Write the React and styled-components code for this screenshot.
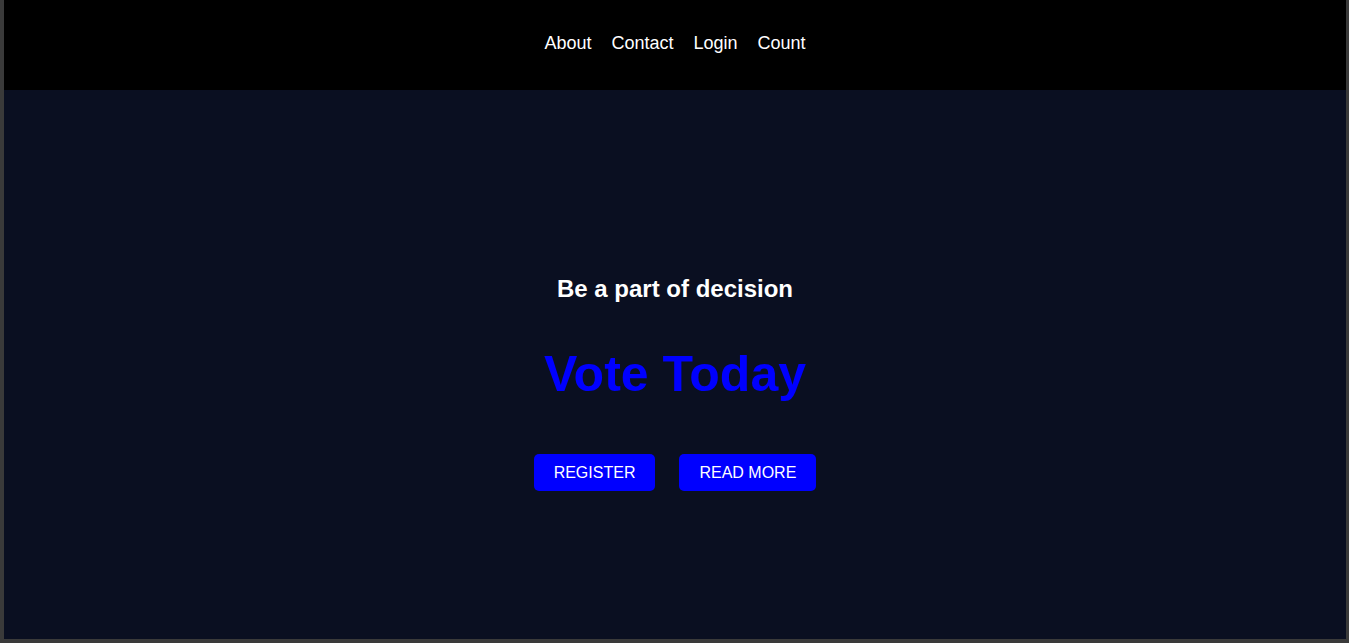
import React from 'react'
import styled, { createGlobalStyle } from 'styled-components'

const GlobalStyle = createGlobalStyle`
    html, body {
        margin: 0;
        padding: 0;
        height: 100%;
        background: #3a3a3a;
        font-family: Arial, "Liberation Sans", sans-serif;
    }

    #root {
        height: 100%;
    }
`

const Frame = styled.div`
    height: 100%;
    box-sizing: border-box;
    padding: 0 3px 4px 4px;
    display: flex;
    flex-direction: column;
`

const Page = styled.div`
    flex: 1;
    display: flex;
    flex-direction: column;
    background: #0a0f21;
`

const Nav = styled.nav`
    height: 90px;
    background: #000;
    display: flex;
    align-items: center;
    justify-content: center;
    gap: 20px;
    padding-bottom: 4px;
    box-sizing: border-box;

    a {
        color: #fff;
        text-decoration: none;
        font-size: 18px;
    }
`

const Hero = styled.section`
    flex: 1;
    display: flex;
    flex-direction: column;
    align-items: center;
    justify-content: center;
    padding-top: 37px;
    text-align: center;

    h3 {
        margin: 0;
        color: #fff;
        font-size: 24px;
        font-weight: bold;
    }

    h1 {
        margin: 42px 0 0;
        color: #0000ff;
        font-size: 50px;
        font-weight: bold;
    }
`

const Buttons = styled.div`
    display: flex;
    gap: 24px;
    margin-top: 51px;
`

const Button = styled.button`
    background: #0000ff;
    color: #fff;
    border: none;
    border-radius: 5px;
    font-family: Arial, "Liberation Sans", sans-serif;
    font-size: 16px;
    height: 37px;
    padding: 0 20px;
    cursor: pointer;
`

const App = () => {
    return (
        <>
            <GlobalStyle />
            <Frame>
                <Page>
                    <Nav>
                        <a href='#'>About</a>
                        <a href='#'>Contact</a>
                        <a href='#'>Login</a>
                        <a href='#'>Count</a>
                    </Nav>
                    <Hero>
                        <h3>Be a part of decision</h3>
                        <h1>Vote Today</h1>
                        <Buttons>
                            <Button>REGISTER</Button>
                            <Button>READ MORE</Button>
                        </Buttons>
                    </Hero>
                </Page>
            </Frame>
        </>
    )
}

export default App
